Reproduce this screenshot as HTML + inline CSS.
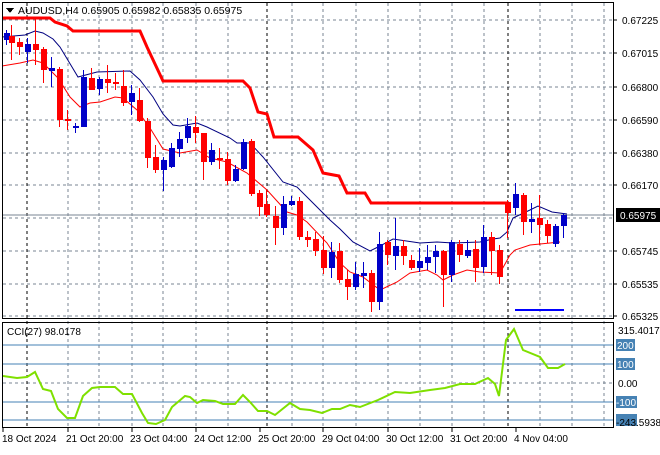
<!DOCTYPE html>
<html><head><meta charset="utf-8"><style>
body{margin:0;background:#fff;width:660px;height:450px;overflow:hidden;font-family:"Liberation Sans",sans-serif;}
svg text{font-family:"Liberation Sans",sans-serif;font-size:10px;fill:#000}
</style></head><body>
<svg width="660" height="450" xmlns="http://www.w3.org/2000/svg" shape-rendering="crispEdges">
<g stroke="#7a8593" stroke-dasharray="3,3" stroke-width="1">
<line x1="3" y1="20" x2="613" y2="20"/><line x1="3" y1="53" x2="613" y2="53"/><line x1="3" y1="87" x2="613" y2="87"/><line x1="3" y1="120" x2="613" y2="120"/><line x1="3" y1="153" x2="613" y2="153"/><line x1="3" y1="185" x2="613" y2="185"/><line x1="3" y1="218" x2="613" y2="218"/><line x1="3" y1="251" x2="613" y2="251"/><line x1="3" y1="284" x2="613" y2="284"/><line x1="3" y1="316" x2="613" y2="316"/>
<line x1="3" y1="383" x2="613" y2="383"/>
<line x1="68" y1="3" x2="68" y2="428"/><line x1="99" y1="3" x2="99" y2="428"/><line x1="132" y1="3" x2="132" y2="428"/><line x1="163" y1="3" x2="163" y2="428"/><line x1="196" y1="3" x2="196" y2="428"/><line x1="228" y1="3" x2="228" y2="428"/><line x1="292" y1="3" x2="292" y2="428"/><line x1="323" y1="3" x2="323" y2="428"/><line x1="356" y1="3" x2="356" y2="428"/><line x1="388" y1="3" x2="388" y2="428"/><line x1="420" y1="3" x2="420" y2="428"/><line x1="452" y1="3" x2="452" y2="428"/><line x1="484" y1="3" x2="484" y2="428"/><line x1="540" y1="3" x2="540" y2="428"/><line x1="572" y1="3" x2="572" y2="428"/><line x1="604" y1="3" x2="604" y2="428"/>
</g>
<g stroke="#000" stroke-dasharray="3,3"><line x1="27" y1="3" x2="27" y2="428"/><line x1="267" y1="3" x2="267" y2="428"/><line x1="508" y1="3" x2="508" y2="428"/></g>
<line x1="3" y1="215" x2="613" y2="215" stroke="#7a8593"/>
<g stroke="#4682b4"><line x1="3" y1="345" x2="613" y2="345"/><line x1="3" y1="364" x2="613" y2="364"/><line x1="3" y1="402" x2="613" y2="402"/><line x1="3" y1="420" x2="613" y2="420"/></g>
<g shape-rendering="auto" fill="none">
<polyline stroke="#ff0000" stroke-width="3" points="2,18 50,18 55,22 67,26 73,31 140,31 147,47 163,81 243,81 250,88 258,112 267,114 274,137 298,137 313,150 323,173 339,176 347,193 365,193 371,203 507,203"/>
<polyline stroke="#000080" stroke-width="1" points="2,37 25,35 35,31 43,33 53,39 60,47 72,67 78,77 97,72 130,71 140,80 153,97 163,114 173,125 180,126 197,123 207,127 230,138 237,143 250,143 263,157 283,182 297,187 310,200 330,220 340,229 353,242 370,251 378,247 393,239 420,243 437,242 453,243 480,242 493,239 500,238 507,232 513,218 530,210 538,206 552,212 567,214"/>
<polyline stroke="#ff0000" stroke-width="1" points="2,66 20,63 33,60 43,63 58,78 70,97 80,107 90,103 100,102 115,97 123,98 137,110 150,128 163,149 180,153 197,150 210,158 227,162 247,173 267,190 287,212 297,215 307,222 327,243 340,263 350,272 363,277 380,290 397,282 410,273 427,270 437,275 443,280 453,275 467,270 480,272 500,273 510,255 515,250 530,245 540,244 560,242"/>
<polyline stroke="#7fe000" stroke-width="2" points="3,376 17,378 27,377 35,372 43,389 51,391 58,409 67,418 75,418 83,396 92,388 100,387 115,387 123,394 132,394 142,413 148,423 156,424 165,420 172,407 185,396 190,397 197,403 203,400 215,401 223,404 235,404 243,395 250,402 258,411 267,411 275,415 290,403 300,409 310,410 322,413 332,409 340,409 350,405 360,407 378,400 395,392 410,393 430,390 445,388 460,384 475,384 488,378 495,384 499,396 506,340 514,329 523,350 540,357 548,368 558,368 565,364"/>
</g>
<line x1="515" y1="310" x2="564" y2="310" stroke="#0000ff" stroke-width="2"/>
<g id="c"></g>
<rect x="2.5" y="2.5" width="611" height="316" fill="none" stroke="#000"/>
<rect x="2.5" y="322.5" width="611" height="105" fill="none" stroke="#000"/>
<polygon points="6,8 14,8 10,13" fill="#000"/>
<text x="18" y="14" style="font-size:10.5px">AUDUSD,H4  0.65905 0.65982 0.65835 0.65975</text>
<text x="7" y="335">CCI(27) 98.0178</text>
<g>
<text x="622" y="24">0.67225</text><text x="622" y="57">0.67015</text><text x="622" y="91">0.66800</text><text x="622" y="124">0.66590</text><text x="622" y="157">0.66380</text><text x="622" y="189">0.66170</text><text x="622" y="255">0.65745</text><text x="622" y="288">0.65535</text><text x="622" y="320">0.65325</text>
<rect x="616" y="208" width="44" height="14" fill="#000"/><text x="620" y="219" style="fill:#fff">0.65975</text>
<text x="618" y="334">315.4017</text>
<rect x="616" y="339" width="19" height="12" fill="#4682b4"/><text x="617" y="349" style="fill:#fff">200</text>
<rect x="616" y="358" width="19" height="12" fill="#4682b4"/><text x="617" y="368" style="fill:#fff">100</text>
<text x="618" y="387">0.00</text>
<rect x="616" y="396" width="21" height="12" fill="#4682b4"/><text x="616" y="406" style="fill:#fff">-100</text>
<rect x="616" y="414" width="21" height="12" fill="#4682b4"/><text x="616" y="426">-243.5938</text>
</g>
<g stroke="#000"><line x1="614" y1="20" x2="617" y2="20"/><line x1="614" y1="53" x2="617" y2="53"/><line x1="614" y1="87" x2="617" y2="87"/><line x1="614" y1="120" x2="617" y2="120"/><line x1="614" y1="153" x2="617" y2="153"/><line x1="614" y1="185" x2="617" y2="185"/><line x1="614" y1="251" x2="617" y2="251"/><line x1="614" y1="284" x2="617" y2="284"/><line x1="614" y1="316" x2="617" y2="316"/>
<line x1="3" y1="428" x2="3" y2="432"/><line x1="68" y1="428" x2="68" y2="432"/><line x1="132" y1="428" x2="132" y2="432"/><line x1="196" y1="428" x2="196" y2="432"/><line x1="260" y1="428" x2="260" y2="432"/><line x1="323" y1="428" x2="323" y2="432"/><line x1="388" y1="428" x2="388" y2="432"/><line x1="452" y1="428" x2="452" y2="432"/><line x1="516" y1="428" x2="516" y2="432"/></g>
<text x="2" y="442">18 Oct 2024</text><text x="66" y="442">21 Oct 20:00</text><text x="130" y="442">23 Oct 04:00</text><text x="194" y="442">24 Oct 12:00</text><text x="258" y="442">25 Oct 20:00</text><text x="322" y="442">29 Oct 04:00</text><text x="386" y="442">30 Oct 12:00</text><text x="450" y="442">31 Oct 20:00</text><text x="514" y="442">4 Nov 04:00</text>
</svg>
<script>
var d=[[6,33,40,30,45,1],[11,36,43,25,60,0],[19,42,47,38,55,0],[27,44,52,38,63,1],[35,44,50,18,65,0],[43,49,70,47,83,0],[51,68,71,57,87,1],[59,69,120,67,127,0],[67,119,121,110,130,0],[75,126,128,123,133,1],[83,77,127,70,127,1],[91,78,90,68,90,0],[99,79,89,77,95,1],[107,79,83,65,93,0],[115,82,84,73,90,0],[123,86,103,70,106,0],[131,93,102,85,115,1],[139,100,121,88,122,0],[147,121,158,118,168,0],[155,157,170,145,173,0],[163,160,170,157,191,1],[171,148,167,143,168,1],[179,139,149,132,157,1],[187,126,138,118,143,1],[195,127,133,116,143,0],[203,133,162,143,180,0],[211,150,162,143,165,1],[219,158,160,148,169,0],[227,159,181,152,185,0],[235,169,181,165,182,1],[243,142,169,139,170,1],[251,141,194,139,196,0],[259,193,207,190,216,0],[266,204,215,190,217,0],[275,216,228,206,245,0],[283,204,228,196,235,1],[291,201,205,196,206,1],[299,201,237,197,240,0],[307,237,240,231,247,0],[315,239,251,232,256,0],[323,250,268,236,274,0],[331,252,268,242,278,1],[339,251,280,243,283,0],[347,279,287,270,300,0],[355,274,287,262,290,1],[363,273,276,262,288,1],[371,273,302,270,312,0],[379,244,302,232,310,1],[387,242,255,240,265,0],[395,246,256,218,270,1],[403,246,256,240,265,0],[411,260,268,255,270,0],[419,261,268,248,272,1],[427,257,263,245,270,1],[435,251,257,245,273,1],[443,251,275,250,307,0],[451,242,275,240,282,1],[459,244,255,240,262,0],[467,250,256,240,258,1],[475,249,268,240,282,0],[483,237,267,225,273,1],[491,237,251,232,275,0],[499,250,277,245,284,0],[507,202,213,200,238,0],[515,194,208,183,215,1],[523,195,222,193,235,0],[531,219,222,203,233,1],[539,218,225,195,245,0],[547,224,236,220,243,0],[555,226,244,224,247,1],[563,215,226,213,238,1]];
var s='';d.forEach(function(c){var col=c[5]?'#0000c8':'#ff0000';s+='<line x1="'+(c[0]+0.5)+'" y1="'+c[3]+'" x2="'+(c[0]+0.5)+'" y2="'+c[4]+'" stroke="'+col+'"/>';s+='<rect x="'+(c[0]-2)+'" y="'+c[1]+'" width="6" height="'+Math.max(2,c[2]-c[1])+'" fill="'+col+'"/>';});
document.getElementById('c').innerHTML=s;
</script>
</body></html>
